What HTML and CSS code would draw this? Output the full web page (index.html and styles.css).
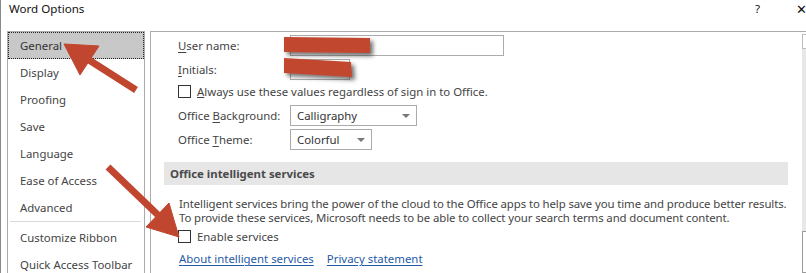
FILE: index.html
```html
<!DOCTYPE html>
<html lang="en">
<head>
  <meta charset="UTF-8" />
  <title>Word Options</title>
  <link rel="stylesheet" href="styles.css">
</head>
<body>
  <div class="window">
    <div class="titlebar">
      <span class="title">Word Options</span>
      <span class="help">?</span>
      <span class="close">&#x2715;</span>
    </div>

    <div class="main">
      <!-- Category list -->
      <ul class="nav">
        <li class="active">General</li>
        <li>Display</li>
        <li>Proofing</li>
        <li>Save</li>
        <li>Language</li>
        <li>Ease of Access</li>
        <li>Advanced</li>
        <li class="sep"></li>
        <li>Customize Ribbon</li>
        <li>Quick Access Toolbar</li>
      </ul>

      <!-- Options panel -->
      <div class="panel">
        <div class="content">
          <div class="row first">
            <label class="label"><u>U</u>ser name:</label>
            <span class="textbox wide"></span>
          </div>
          <div class="row">
            <label class="label"><u>I</u>nitials:</label>
            <span class="textbox narrow"></span>
          </div>
          <div class="check-row always">
            <span class="checkbox"></span>
            <span><u>A</u>lways use these values regardless of sign in to Office.</span>
          </div>
          <div class="row bg-row">
            <label class="label">Office <u>B</u>ackground:</label>
            <span class="select bg-select">Calligraphy<span class="caret"></span></span>
          </div>
          <div class="row">
            <label class="label">Office <u>T</u>heme:</label>
            <span class="select theme-select">Colorful<span class="caret"></span></span>
          </div>

          <div class="section-head">Office intelligent services</div>
          <p class="desc">Intelligent services bring the power of the cloud to the Office apps to help save you time and produce better results.<br>To provide these services, Microsoft needs to be able to collect your search terms and document content.</p>
          <div class="check-row enable">
            <span class="checkbox"></span>
            <span>Enable services</span>
          </div>
          <div class="links">
            <a href="#">About intelligent services</a>
            <a href="#">Privacy statement</a>
          </div>
        </div>

        <div class="scrollbar">
          <div class="sb-up"></div>
          <div class="sb-track"></div>
          <div class="sb-thumb"></div>
        </div>
      </div>
    </div>

    <!-- Annotations drawn over the screenshot -->
    <svg class="marks" width="806" height="273" viewBox="0 0 806 273">
      <defs>
        <filter id="shade" x="-20%" y="-50%" width="150%" height="250%">
          <feDropShadow dx="3" dy="3" stdDeviation="2" flood-color="#333" flood-opacity="0.7" />
        </filter>
      </defs>
      <g fill="#c1462f" filter="url(#shade)">
        <polygon points="283,37 369,38 369,53 283,52" />
        <polygon points="283,58 350,62 351,77 283,73" />
      </g>
      <g fill="#c1462f" stroke="#c1462f">
        <line x1="135" y1="90" x2="88" y2="60" stroke-width="7" />
        <polygon points="63,44 98,46 79,75" stroke-width="1" />
        <line x1="107" y1="167" x2="157" y2="215" stroke-width="7" />
        <polygon points="178,237 145,227 168,203" stroke-width="1" />
      </g>
    </svg>
  </div>
</body>
</html>
```

FILE: styles.css
```css
* {
  margin: 0;
  padding: 0;
  box-sizing: border-box;
}
body {
  font-family: 'Noto Sans', 'Open Sans', sans-serif;
  font-size: 11.4px;
  color: #444;
  background: #fff;
  overflow: hidden;
}
.window {
  position: relative;
  width: 806px;
  height: 273px;
  overflow: hidden;
  border-left: 1px solid #8a8a8a;
}
/* Title Bar */
.titlebar {
  height: 31px;
  display: flex;
  align-items: flex-start;
  padding-top: 1px;
  line-height: 16px;
  color: #111;
}
.title {
  margin-left: 8px;
  font-size: 11.6px;
}
.help {
  margin-left: auto;
  margin-right: 36px;
  font-size: 11.6px;
}
.close {
  margin-right: -4px;
  font-size: 13px;
  width: 14px;
}
/* Layout */
.main {
  display: flex;
  padding-left: 6px;
  height: 242px;
}
/* Category List */
.nav {
  list-style: none;
  width: 138px;
  border-top: 1px solid #ababab;
  border-left: 1px solid #ababab;
  border-right: 1px solid #ababab;
  flex-shrink: 0;
}
.nav li {
  height: 27px;
  line-height: 25px;
  padding-left: 11px;
  white-space: nowrap;
  border: 1px solid transparent;
}
.nav li.active {
  background: #c8c8c8;
  border: 1px dotted #222;
  color: #333;
}
.nav li.sep {
  height: 1px;
  border: none;
  background: #dadada;
  margin: 0 3px 2px 2px;
}
/* Options Panel */
.panel {
  display: flex;
  margin-left: 5px;
  width: 672px;
  border-top: 1px solid #ababab;
  border-left: 1px solid #ababab;
}
.content {
  width: 651px;
  padding: 0 14px 0 13px;
  flex-shrink: 0;
}
.row {
  display: flex;
  align-items: center;
  height: 21px;
  margin: 3px 0 0 14px;
}
.row.first {
  margin-top: 3px;
}
.row.bg-row {
  margin-top: 7px;
}
.label {
  width: 112px;
  flex-shrink: 0;
}
.label u {
  text-underline-offset: 2px;
}
.textbox {
  height: 21px;
  border: 1px solid #ababab;
  background: #fff;
}
.textbox.wide {
  width: 214px;
}
.textbox.narrow {
  width: 60px;
}
.check-row {
  display: flex;
  align-items: center;
  height: 13px;
  margin-left: 14px;
}
.check-row.always {
  margin-top: 5px;
}
.check-row.enable {
  margin-top: 6px;
}
.checkbox {
  width: 13px;
  height: 13px;
  border: 1px solid #333;
  background: #fff;
  margin-right: 6px;
  flex-shrink: 0;
}
.select {
  position: relative;
  height: 21px;
  line-height: 19px;
  border: 1px solid #ababab;
  padding-left: 6px;
  color: #333;
}
.bg-select {
  width: 127px;
}
.theme-select {
  width: 82px;
}
.caret {
  position: absolute;
  right: 6px;
  top: 8px;
  width: 0;
  height: 0;
  border-left: 4px solid transparent;
  border-right: 4px solid transparent;
  border-top: 4px solid #777;
}
/* Intelligent Services */
.section-head {
  margin-top: 12px;
  height: 23px;
  line-height: 23px;
  padding-left: 6px;
  background: #e6e6e6;
  font-weight: 700;
  color: #4a4a4a;
}
.desc {
  margin: 12px 0 0 15px;
  line-height: 14px;
  letter-spacing: -0.1px;
  white-space: nowrap;
}
.check-row.enable {
  margin-top: 5px;
}
.links {
  display: flex;
  gap: 13px;
  height: 16px;
  line-height: 16px;
  margin: 8px 0 0 15px;
}
.links a {
  color: #245aa6;
  text-decoration: underline;
  text-underline-offset: 2px;
}
/* Scrollbar */
.scrollbar {
  width: 17px;
  padding-top: 2px;
  display: flex;
  flex-direction: column;
}
.sb-up {
  height: 15px;
  border: 1px solid #bdbdbd;
  background: #fff;
}
.sb-track {
  height: 182px;
  background: #e8e8e8;
}
.sb-thumb {
  flex: 1;
  border: 1px solid #9a9a9a;
  background: #fff;
}
/* Annotations */
.marks {
  position: absolute;
  left: 0;
  top: 0;
  pointer-events: none;
}
```
